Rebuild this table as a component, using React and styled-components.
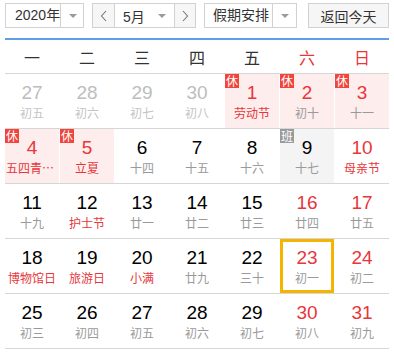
import React from "react";
import styled, { createGlobalStyle } from "styled-components";

const Global = createGlobalStyle`
  html, body { margin: 0; padding: 0; background: #fff; }
  body { font-family: "Liberation Sans", "Noto Sans CJK SC", sans-serif; }
`;

const Page = styled.div`
  width: 384px;
  padding: 3px 5px 0 5px;
`;

const Toolbar = styled.div`
  display: flex;
  align-items: stretch;
  gap: 8px;
  height: 25px;
  font-size: 14px;
  color: #333;
`;

const Select = styled.div`
  display: flex;
  width: ${(p) => p.$w}px;
  box-sizing: border-box;
  border: 1px solid #d2d2d2;
  background: #fff;
`;

const SelectText = styled.div`
  flex: 1;
  display: flex;
  align-items: center;
  padding-left: ${(p) => p.$pl || 0}px;
  line-height: 23px;
  white-space: nowrap;
`;

const ArrowBox = styled.div`
  flex: 0 0 ${(p) => p.$w}px;
  display: flex;
  align-items: center;
  justify-content: center;
  border-left: ${(p) => (p.$divider ? "1px solid #d2d2d2" : "none")};
`;

const Caret = styled.span`
  width: 0;
  height: 0;
  border-left: 4px solid transparent;
  border-right: 4px solid transparent;
  border-top: 4px solid #9a9a9a;
`;

const Group = styled.div`
  display: flex;
  width: 104px;
  box-sizing: border-box;
  border: 1px solid #d2d2d2;
`;

const NavBtn = styled.div`
  flex: 0 0 ${(p) => p.$w}px;
  display: flex;
  align-items: center;
  justify-content: center;
  background: #f6f6f6;
  border-left: ${(p) => (p.$left ? "1px solid #d2d2d2" : "none")};
  border-right: ${(p) => (p.$right ? "1px solid #d2d2d2" : "none")};
`;

const MonthSel = styled.div`
  flex: 1;
  min-width: 0;
  display: flex;
  align-items: center;
  justify-content: space-between;
  background: #fff;
  padding-left: 8px;
  white-space: nowrap;
`;

const ReturnBtn = styled.div`
  margin-left: auto;
  width: 81px;
  box-sizing: border-box;
  border: 1px solid #d2d2d2;
  background: #f6f6f6;
  display: flex;
  align-items: center;
  justify-content: center;
  white-space: nowrap;
`;

const Calendar = styled.div`
  margin-top: 10px;
  border-top: 2px solid #5e9fe6;
`;

const WeekHead = styled.div`
  display: grid;
  grid-template-columns: repeat(7, 1fr);
  column-gap: 1px;
  height: 33px;
  border-bottom: 1px solid #d6d6d6;
  font-family: "Noto Sans CJK SC", sans-serif;
  font-size: 16px;
`;

const WeekDay = styled.div`
  display: flex;
  align-items: center;
  justify-content: center;
  color: ${(p) => (p.$red ? "#e8363a" : "#333")};
`;

const Row = styled.div`
  display: grid;
  grid-template-columns: repeat(7, 1fr);
  column-gap: 1px;
  height: 54px;
  border-bottom: 1px solid #d6d6d6;
`;

const Cell = styled.div`
  position: relative;
  box-sizing: border-box;
  display: flex;
  flex-direction: column;
  align-items: center;
  padding-top: ${(p) => (p.$selected ? 6 : 9)}px;
  background: ${(p) =>
    p.$kind === "rest" ? "#fdeded" : p.$kind === "work" ? "#f4f4f4" : "#fff"};
  border: ${(p) => (p.$selected ? "3px solid #f5b400" : "none")};
  min-width: 0;
`;

const DayNum = styled.div`
  font-family: "Liberation Sans", sans-serif;
  font-size: 19px;
  line-height: 20px;
  color: ${(p) => (p.$tone === "muted" ? "#bdbdbd" : p.$tone === "red" ? "#e8363a" : "#000")};
`;

const Lunar = styled.div`
  margin-top: 2px;
  font-family: "Noto Sans CJK SC", sans-serif;
  font-size: 12px;
  line-height: 16px;
  max-width: 52px;
  overflow: hidden;
  white-space: nowrap;
  text-overflow: ellipsis;
  color: ${(p) => (p.$tone === "muted" ? "#c4c4c4" : p.$tone === "red" ? "#e8363a" : "#9a9a9a")};
`;

const Badge = styled.span`
  position: absolute;
  top: 0;
  left: 0;
  width: 14px;
  height: 14px;
  background: ${(p) => (p.$work ? "#9a9a9a" : "#f0443c")};
  color: #fff;
  font-family: "Noto Sans CJK SC", sans-serif;
  font-size: 12px;
  line-height: 14px;
  text-align: center;
`;

const Chevron = ({ dir }) => (
  <svg width="8" height="12" viewBox="0 0 8 12">
    <polyline
      points={dir === "left" ? "6,1 1.5,6 6,11" : "2,1 6.5,6 2,11"}
      fill="none"
      stroke="#777"
      strokeWidth="1.1"
    />
  </svg>
);

const d = (n, lunar, opts = {}) => ({ n, lunar, ...opts });

const rows = [
  [
    d(27, "初五", { muted: true }),
    d(28, "初六", { muted: true }),
    d(29, "初七", { muted: true }),
    d(30, "初八", { muted: true }),
    d(1, "劳动节", { rest: true, fest: true }),
    d(2, "初十", { rest: true }),
    d(3, "十一", { rest: true }),
  ],
  [
    d(4, "五四青年节", { rest: true, fest: true }),
    d(5, "立夏", { rest: true, fest: true }),
    d(6, "十四"),
    d(7, "十五"),
    d(8, "十六"),
    d(9, "十七", { work: true }),
    d(10, "母亲节", { fest: true }),
  ],
  [
    d(11, "十九"),
    d(12, "护士节", { fest: true }),
    d(13, "廿一"),
    d(14, "廿二"),
    d(15, "廿三"),
    d(16, "廿四"),
    d(17, "廿五"),
  ],
  [
    d(18, "博物馆日", { fest: true }),
    d(19, "旅游日", { fest: true }),
    d(20, "小满", { fest: true }),
    d(21, "廿九"),
    d(22, "三十"),
    d(23, "初一", { selected: true }),
    d(24, "初二"),
  ],
  [
    d(25, "初三"),
    d(26, "初四"),
    d(27, "初五"),
    d(28, "初六"),
    d(29, "初七"),
    d(30, "初八"),
    d(31, "初九"),
  ],
];

const weekdays = ["一", "二", "三", "四", "五", "六", "日"];

export default function App() {
  return (
    <Page>
      <Global />
      <Toolbar>
        <Select $w={79}>
          <SelectText $pl={9}>2020年</SelectText>
          <ArrowBox $w={23} $divider>
            <Caret />
          </ArrowBox>
        </Select>
        <Group>
          <NavBtn $w={21} $right>
            <Chevron dir="left" />
          </NavBtn>
          <MonthSel>
            <span>5月</span>
            <ArrowBox $w={24}>
              <Caret />
            </ArrowBox>
          </MonthSel>
          <NavBtn $w={20} $left>
            <Chevron dir="right" />
          </NavBtn>
        </Group>
        <Select $w={93}>
          <SelectText $pl={8}>假期安排</SelectText>
          <ArrowBox $w={23} $divider>
            <Caret />
          </ArrowBox>
        </Select>
        <ReturnBtn>返回今天</ReturnBtn>
      </Toolbar>
      <Calendar>
        <WeekHead>
          {weekdays.map((w, i) => (
            <WeekDay key={w} $red={i >= 5}>
              {w}
            </WeekDay>
          ))}
        </WeekHead>
        {rows.map((row, ri) => (
          <Row key={ri}>
            {row.map((c, ci) => {
              const weekend = ci >= 5 && !c.work;
              const numTone = c.muted ? "muted" : c.rest || weekend ? "red" : "normal";
              const lunarTone = c.muted ? "muted" : c.fest ? "red" : "normal";
              return (
                <Cell
                  key={ci}
                  $kind={c.rest ? "rest" : c.work ? "work" : "plain"}
                  $selected={c.selected}
                >
                  {c.rest && <Badge>休</Badge>}
                  {c.work && <Badge $work>班</Badge>}
                  <DayNum $tone={numTone}>{c.n}</DayNum>
                  <Lunar $tone={lunarTone}>{c.lunar}</Lunar>
                </Cell>
              );
            })}
          </Row>
        ))}
      </Calendar>
    </Page>
  );
}
